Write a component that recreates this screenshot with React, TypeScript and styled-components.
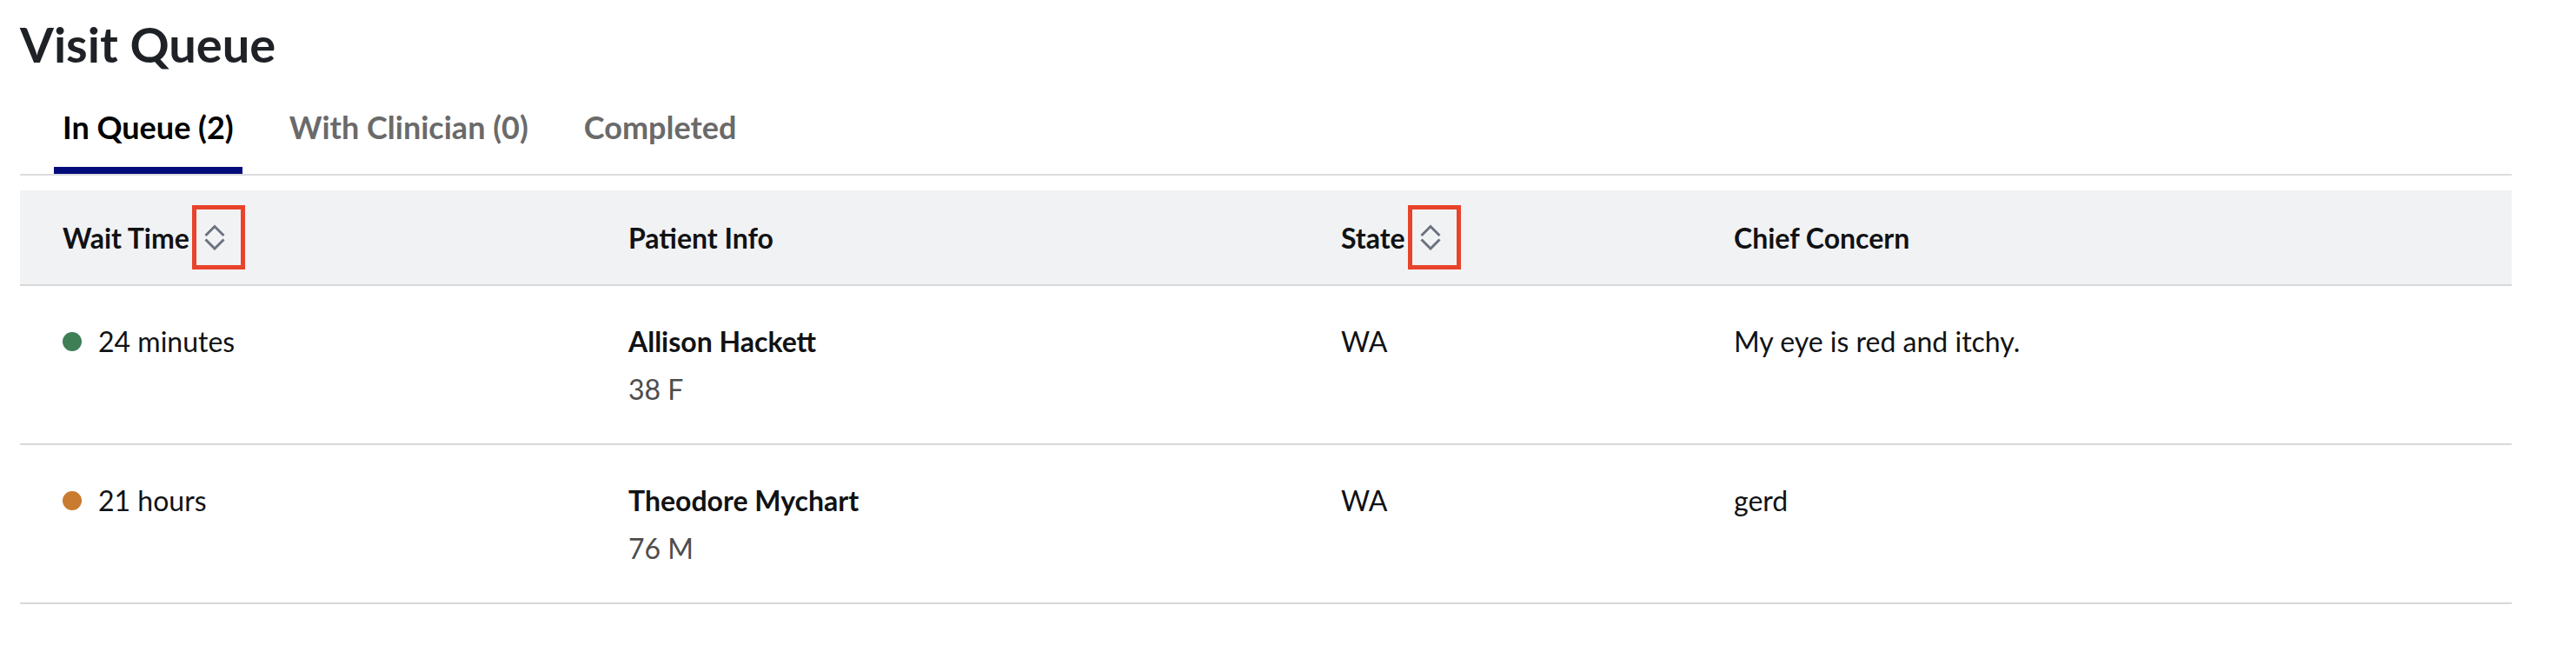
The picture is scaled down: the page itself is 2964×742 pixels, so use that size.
import styled, { createGlobalStyle } from 'styled-components';

interface Visit {
    id: string;
    wait: string;
    urgency: 'ok' | 'late';
    name: string;
    details: string;
    state: string;
    concern: string;
}

const visits: Visit[] = [
    {
        id: '1',
        wait: '24 minutes',
        urgency: 'ok',
        name: 'Allison Hackett',
        details: '38 F',
        state: 'WA',
        concern: 'My eye is red and itchy.',
    },
    {
        id: '2',
        wait: '21 hours',
        urgency: 'late',
        name: 'Theodore Mychart',
        details: '76 M',
        state: 'WA',
        concern: 'gerd',
    },
];

const tabs = [
    { label: 'In Queue (2)', active: true },
    { label: 'With Clinician (0)', active: false },
    { label: 'Completed', active: false },
];

const colors = {
    text: '#111214',
    title: '#1e2126',
    muted: '#6a6a6a',
    sub: '#4d4d4d',
    navy: '#020b79',
    line: '#dcdcdf',
    rowLine: '#d8d8d8',
    headBg: '#f1f2f4',
    green: '#3f7f55',
    orange: '#c97b2f',
    marker: '#e8432b',
    icon: '#6b7280',
};

const GlobalStyle = createGlobalStyle`
    body {
        margin: 0;
        background: #ffffff;
        font-family: Lato, "Open Sans", "Liberation Sans", sans-serif;
        color: ${colors.text};
    }
`;

const SortIcon = () => (
    <svg width="26" height="30" viewBox="0 0 26 30" fill="none">
        <path d="M2.5 13 L13 2.5 L23.5 13" stroke={colors.icon} strokeWidth="3" />
        <path d="M2.5 17.5 L13 28 L23.5 17.5" stroke={colors.icon} strokeWidth="3" />
    </svg>
);

const SortButton = () => (
    <Sort>
        <SortIcon />
    </Sort>
);

export default function App() {
    return (
        <>
            <GlobalStyle />
            <Page>
                <Title>Visit Queue</Title>
                <TabBar>
                    {tabs.map((tab) => (
                        <Tab key={tab.label} $active={tab.active}>
                            {tab.label}
                        </Tab>
                    ))}
                </TabBar>
                <Table>
                    <HeadRow>
                        <HeadCell>
                            Wait Time
                            <SortButton />
                        </HeadCell>
                        <HeadCell>Patient Info</HeadCell>
                        <HeadCell>
                            State
                            <SortButton />
                        </HeadCell>
                        <HeadCell>Chief Concern</HeadCell>
                    </HeadRow>
                    {visits.map((visit) => (
                        <Row key={visit.id}>
                            <Cell>
                                <Wait>
                                    <Dot $color={visit.urgency === 'ok' ? colors.green : colors.orange} />
                                    {visit.wait}
                                </Wait>
                            </Cell>
                            <Cell>
                                <Name>{visit.name}</Name>
                                <Sub>{visit.details}</Sub>
                            </Cell>
                            <Cell>{visit.state}</Cell>
                            <Cell>{visit.concern}</Cell>
                        </Row>
                    ))}
                </Table>
            </Page>
        </>
    );
}

const Page = styled.main`
    padding: 17px 74px 40px 23px;
`;

const Title = styled.h1`
    margin: 0 0 18px;
    font-size: 56px;
    line-height: 67px;
    font-weight: 700;
    color: ${colors.title};
`;

const TabBar = styled.nav`
    display: flex;
    gap: 44px;
    padding-left: 39px;
    border-bottom: 2px solid ${colors.line};
`;

const Tab = styled.div<{ $active: boolean }>`
    padding: 20px 10px 22px;
    font-size: 36px;
    line-height: 48px;
    font-weight: 700;
    color: ${({ $active }) => ($active ? '#000000' : colors.muted)};
    border-bottom: 8px solid ${({ $active }) => ($active ? colors.navy : 'transparent')};
`;

const Table = styled.section`
    margin-top: 17px;
    display: grid;
    grid-template-columns: 651px 820px 452px 1fr;
`;

const HeadRow = styled.div`
    display: contents;
`;

const HeadCell = styled.div`
    display: flex;
    align-items: center;
    height: 110px;
    box-sizing: border-box;
    padding: 0 48px 0 49px;
    background: ${colors.headBg};
    border-bottom: 2px solid ${colors.rowLine};
    font-size: 32px;
    font-weight: 700;
    color: ${colors.text};
`;

const Sort = styled.span`
    flex: none;
    display: flex;
    align-items: center;
    box-sizing: border-box;
    height: 74px;
    margin-left: 3px;
    padding: 0 17px 0 8px;
    border: 5px solid ${colors.marker};
`;

const Row = styled.div`
    display: contents;
`;

const Cell = styled.div`
    padding: 40px 48px 38px 49px;
    border-bottom: 2px solid ${colors.rowLine};
    font-size: 32px;
    line-height: 48px;
    color: ${colors.text};
`;

const Wait = styled.div`
    display: flex;
    align-items: center;
`;

const Dot = styled.span<{ $color: string }>`
    flex: none;
    width: 22px;
    height: 22px;
    margin-right: 19px;
    border-radius: 50%;
    background: ${({ $color }) => $color};
`;

const Name = styled.div`
    font-weight: 700;
`;

const Sub = styled.div`
    margin-top: 7px;
    color: ${colors.sub};
`;
